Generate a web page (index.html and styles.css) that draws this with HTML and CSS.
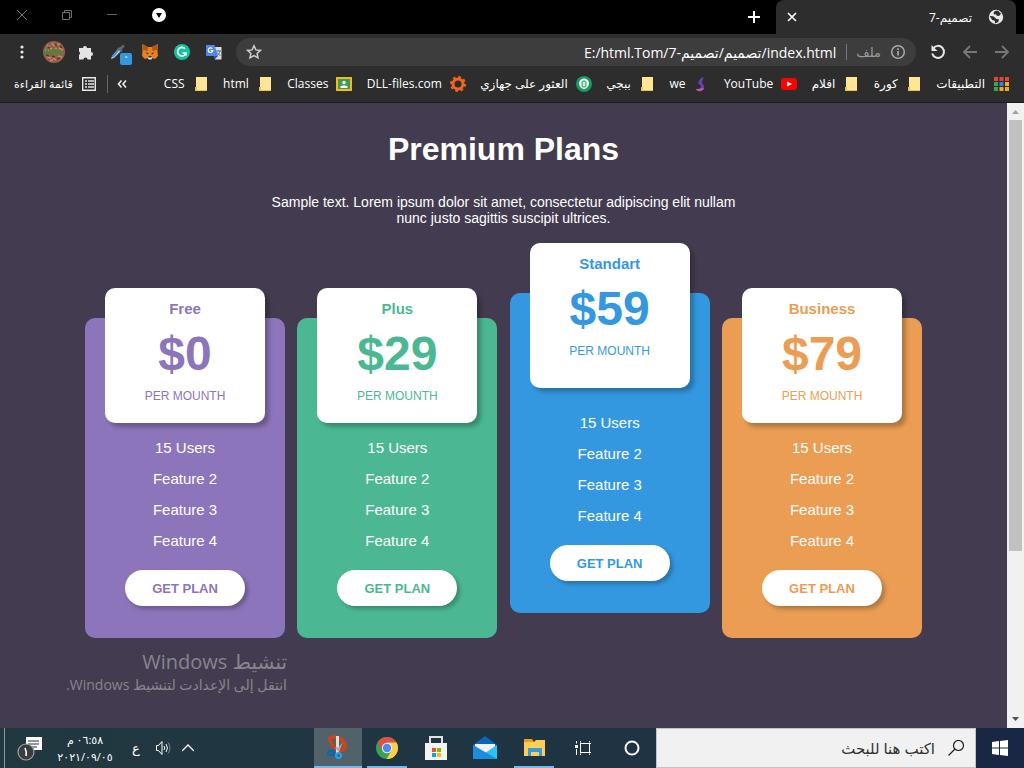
FILE: index.html
```
<!DOCTYPE html>
<html lang="ar">
<head>
<meta charset="utf-8">
<title>تصميم-7</title>
<link rel="stylesheet" href="styles.css">
</head>
<body>
<div class="desktop">
  <header class="browser" dir="rtl">
    <div class="tabstrip">
      <div class="tab">
        <svg class="i16" viewBox="0 0 16 16"><circle cx="8" cy="8" r="7.2" fill="#e8e8e8"/><path d="M6.5 2.2 9.6 1.6 13 4.5l-1.6 2.2-2.5.2L8.200 5.200 6.300 5.600 5.500 4zM1.500 6.800l4.300.8 2.600 2.300 2.500.4-.6 2.600-3.200 1.700-.3-2.800-2.600-.9z" fill="#2d2d2d"/></svg>
        <span class="tab-title">تصميم-7</span>
        <button class="icon-btn" aria-label="Close tab"><svg class="i12" viewBox="0 0 12 12"><path d="M2 2l8 8M10 2l-8 8" stroke="#fff" stroke-width="1.700"/></svg></button>
      </div>
      <button class="icon-btn new-tab" aria-label="New tab"><svg class="i16" viewBox="0 0 16 16"><path d="M8 2v12M2 8h12" stroke="#fff" stroke-width="2"/></svg></button>
      <div class="window-controls">
        <button class="icon-btn" aria-label="Tab search"><svg class="i16" viewBox="0 0 16 16"><circle cx="8" cy="8" r="7" fill="#fff"/><path d="M5 6h6L8 11z" fill="#000"/></svg></button>
        <button class="icon-btn" aria-label="Minimize"><svg class="i12" viewBox="0 0 12 12"><path d="M1 5.500h10" stroke="#666"/></svg></button>
        <button class="icon-btn" aria-label="Restore"><svg class="i12" viewBox="0 0 12 12"><path d="M1.500 3.500h7v7h-7zM3.500 3V1.500h7v7H9" fill="none" stroke="#707070"/></svg></button>
        <button class="icon-btn" aria-label="Close"><svg class="i12" viewBox="0 0 12 12"><path d="M1 1l10 10M11 1L1 11" stroke="#777"/></svg></button>
      </div>
    </div>
    <div class="toolbar">
      <div class="nav">
        <button class="icon-btn" aria-label="Back"><svg class="i16" viewBox="0 0 16 16"><path d="M1 8h13M8 2l6 6-6 6" fill="none" stroke="#777" stroke-width="1.800"/></svg></button>
        <button class="icon-btn" aria-label="Forward"><svg class="i16" viewBox="0 0 16 16"><path d="M15 8H2M8 2L2 8l6 6" fill="none" stroke="#777" stroke-width="1.800"/></svg></button>
        <button class="icon-btn" aria-label="Reload"><svg class="i16" viewBox="0 0 16 16"><path d="M3 4.500A6 6 0 1 1 2.200 9.500" fill="none" stroke="#e6e6e6" stroke-width="2"/><path d="M1.500 1v6h6z" fill="#e6e6e6"/></svg></button>
      </div>
      <div class="omnibox">
        <svg class="i16" viewBox="0 0 16 16"><circle cx="8" cy="8" r="6.300" fill="none" stroke="#aaa" stroke-width="1.500"/><path d="M8 7v4.500M8 4.200v1.700" stroke="#aaa" stroke-width="1.700"/></svg>
        <label class="scheme" for="url">ملف</label>
        <input id="url" class="url" dir="ltr" type="text" value="E:/html.Tom/تصميم/تصميم-7/index.html">
        <button class="icon-btn" aria-label="Bookmark"><svg class="i16" viewBox="0 0 16 16"><path d="M8 1.800l1.900 4.100 4.500.5-3.300 3 .9 4.400-4-2.200-4 2.200.9-4.400-3.300-3 4.500-.5z" fill="none" stroke="#ccc" stroke-width="1.500"/></svg></button>
      </div>
      <div class="extensions">
        <button class="icon-btn" aria-label="Translate"><svg class="i16" viewBox="0 0 16 16"><path d="M7 3h8.500v12.500H9z" fill="#dcdcdc"/><path d="M10 7h5M12.500 6v1M14 7c-.5 2.500-2 4-3.500 5M11 8.500l3.500 3.500" stroke="#607d8b" fill="none"/><path d="M0 1h8.500l3.500 11H0z" fill="#4c86ee"/><path d="M8.500 15.500V12H12z" fill="#2452b5"/><path d="M6.300 4.700a2.300 2.300 0 1 0 .5 2H4.800" stroke="#fff" stroke-width="1.200" fill="none"/></svg></button>
        <button class="icon-btn" aria-label="Grammarly"><svg class="i16" viewBox="0 0 16 16"><circle cx="8" cy="8" r="8" fill="#15c39a"/><path d="M11 4.700A4.300 4.300 0 1 0 12 9H8.500M12 9v2.500" fill="none" stroke="#fff" stroke-width="1.600"/></svg></button>
        <button class="icon-btn" aria-label="MetaMask"><svg class="i16" viewBox="0 0 16 16"><path d="M0 0l6 3h4l6-3-.5 7 .5 5-3 3-3-1H6l-3 1-3-3 .5-5z" fill="#e8821e"/><path d="M0 0l6 3-.5 4L1 6zM16 0l-6 3 .5 4L15 6z" fill="#b5561b"/><path d="M5.500 13h5l-1 2.500h-3z" fill="#ddd"/><path d="M3.500 8.500l3 .5-.5 1.500zM12.500 8.500l-3 .5.500 1.500zM6.500 12h3v1.500h-3z" fill="#26313e"/></svg></button>
        <button class="icon-btn picker" aria-label="Color picker"><svg class="i16" viewBox="0 0 16 16"><path d="M1 15l1-3 6-7 3 2-7 7z" fill="#9fd2f0"/><path d="M2.500 13l6-7" stroke="#3589c6" stroke-width="1.500"/><path d="M8 4l4 3M10 5L14 1.500" stroke="#5b6a70" stroke-width="2.500"/></svg><span class="picker-badge">·</span></button>
        <button class="icon-btn" aria-label="Extensions"><svg class="i16" viewBox="0 0 16 16"><path d="M1 4h4a2 2 0 1 1 4 0h4v4a2 2 0 1 1 0 4v3.500H9.500a2 2 0 0 0-4 0H1V11a2 2 0 0 0 0-3.500z" fill="#e4e4e4"/></svg></button>
        <button class="icon-btn" aria-label="Profile"><svg class="i22" viewBox="0 0 22 22"><circle cx="11" cy="11" r="11" fill="#94604a"/><path d="M4 4l3 2M9 2l2 3M14 4l3-1M2 9l4 1M16 7l4 2M4 16l4 1M10 17l3 2M15 15l4 1M7 7l2 1M12 7l2 1M7 20l3-1" stroke="#c08c70" stroke-width="1.500"/><path d="M5 6l2 1M12 3l2 2M17 5l2 2M3 14l3 1M9 15l3 1M14 18l3-1" stroke="#5e3526" stroke-width="1.500"/><path d="M2 13l2-4 1 3 2-2 1 2 2-2 1 2 2-3 1 3 2-2 1 2 3-1" stroke="#329432" stroke-width="1.600" fill="none"/></svg></button>
        <button class="icon-btn" aria-label="Menu"><svg class="i16" viewBox="0 0 16 16" fill="#e8e8e8"><circle cx="8" cy="3" r="1.600"/><circle cx="8" cy="8" r="1.600"/><circle cx="8" cy="13" r="1.600"/></svg></button>
      </div>
    </div>
    <nav class="bookmarks">
      <div class="bookmark-list">
        <a class="bm" href="#"><svg class="i16" viewBox="0 0 16 16"><path d="M1 1h4v4H1z" fill="#ea4335"/><path d="M6.500 1h4v4h-4zM12 1h4v4h-4z" fill="#ea4335"/><path d="M1 6h4v4H1zM1 11h4v4H1z" fill="#34a853"/><path d="M6.500 6h4v4h-4z" fill="#2b86f5"/><path d="M12 6h4v4h-4zM6.500 11h4v4h-4zM12 11h4v4h-4z" fill="#fbab0b"/></svg><span>التطبيقات</span></a>
        <a class="bm" href="#"><svg class="i16" viewBox="0 0 16 16"><path d="M3 1h11v14H2v-4h1z" fill="#ffe694"/><path d="M2 11h2v3h10v1H2z" fill="#e8c350"/></svg><span>كورة</span></a>
        <a class="bm" href="#"><svg class="i16" viewBox="0 0 16 16"><path d="M3 1h11v14H2v-4h1z" fill="#ffe694"/><path d="M2 11h2v3h10v1H2z" fill="#e8c350"/></svg><span>افلام</span></a>
        <a class="bm" href="#"><svg class="i16" viewBox="0 0 16 16"><rect y="2" width="16" height="12" rx="3" fill="#f00"/><path d="M6 5.500v5L11 8z" fill="#fff"/></svg><span>YouTube</span></a>
        <a class="bm" href="#"><svg class="i16" viewBox="0 0 16 16"><path d="M10 1C5 4 4 7 7 9c2 1.500 1 4-4 4 1 3 7 3 8-1 .8-3-2-4-2-6 0-1.500 2-2 1-5z" fill="#6a3cb8"/><path d="M3 13c3 .5 6-1 8-1-1 4-7 4-8 1z" fill="#c0608f"/></svg><span>we</span></a>
        <a class="bm" href="#"><svg class="i16" viewBox="0 0 16 16"><path d="M3 1h11v14H2v-4h1z" fill="#ffe694"/><path d="M2 11h2v3h10v1H2z" fill="#e8c350"/></svg><span>ببجي</span></a>
        <a class="bm" href="#"><svg class="i16" viewBox="0 0 16 16"><circle cx="8" cy="8" r="8" fill="#169b5b"/><path d="M8 2.500a5 5 0 0 1 5 5c0 3-3 5-5 6-2-1-5-3-5-6a5 5 0 0 1 5-5z" fill="#fff"/><rect x="6" y="5" width="4" height="6" rx="1" fill="#c9e9da" stroke="#169b5b"/></svg><span>العثور على جهازي</span></a>
        <a class="bm" href="#"><svg class="i16" viewBox="0 0 16 16"><circle cx="8" cy="8" r="5" fill="none" stroke="#f4651b" stroke-width="3"/><circle cx="8" cy="8" r="6.900" fill="none" stroke="#f4651b" stroke-width="2.200" stroke-dasharray="2.710 2.710"/></svg><span>DLL-files.com</span></a>
        <a class="bm" href="#"><svg class="i16" viewBox="0 0 16 16"><path d="M0 1h16v14H0z" fill="#f5ba15"/><path d="M2 3h12v10H2z" fill="#3d9a58"/><circle cx="8" cy="6.500" r="1.700" fill="#fff"/><path d="M4.500 12V10.500C5 9 11 9 11.500 10.500V12z" fill="#fff"/></svg><span>Classes</span></a>
        <a class="bm" href="#"><svg class="i16" viewBox="0 0 16 16"><path d="M3 1h11v14H2v-4h1z" fill="#ffe694"/><path d="M2 11h2v3h10v1H2z" fill="#e8c350"/></svg><span>html</span></a>
        <a class="bm" href="#"><svg class="i16" viewBox="0 0 16 16"><path d="M3 1h11v14H2v-4h1z" fill="#ffe694"/><path d="M2 11h2v3h10v1H2z" fill="#e8c350"/></svg><span>CSS</span></a>
      </div>
      <button class="icon-btn more" aria-label="More bookmarks"><svg class="i12" viewBox="0 0 12 12"><path d="M5.500 2.500L2.500 6l3 3.500M10 2.500L7 6l3 3.500" fill="none" stroke="#eee" stroke-width="1.600"/></svg></button>
      <a class="bm reading" href="#"><svg class="i16" viewBox="0 0 16 16"><path d="M1.700 1.700h12.600v12.600H1.700z" fill="none" stroke="#e8e8e8" stroke-width="1.400"/><path d="M4 5h2M7 5h6M4 8h2M7 8h6M4 11h2M7 11h6" stroke="#e8e8e8" stroke-width="1.500"/></svg><span class="ar">قائمة القراءة</span></a>
    </nav>
  </header>

  <div class="viewport">
    <main class="page" dir="ltr">
      <h1>Premium Plans</h1>
      <p class="lead">Sample text. Lorem ipsum dolor sit amet, consectetur adipiscing elit nullam nunc justo sagittis suscipit ultrices.</p>
      <div class="plans">
        <section class="plan free">
          <div class="plan-head"><h2>Free</h2><strong class="price">$0</strong><span class="period">PER MOUNTH</span></div>
          <ul><li>15 Users</li><li>Feature 2</li><li>Feature 3</li><li>Feature 4</li></ul>
          <button class="get">GET PLAN</button>
        </section>
        <section class="plan plus">
          <div class="plan-head"><h2>Plus</h2><strong class="price">$29</strong><span class="period">PER MOUNTH</span></div>
          <ul><li>15 Users</li><li>Feature 2</li><li>Feature 3</li><li>Feature 4</li></ul>
          <button class="get">GET PLAN</button>
        </section>
        <section class="plan standart">
          <div class="plan-head"><h2>Standart</h2><strong class="price">$59</strong><span class="period">PER MOUNTH</span></div>
          <ul><li>15 Users</li><li>Feature 2</li><li>Feature 3</li><li>Feature 4</li></ul>
          <button class="get">GET PLAN</button>
        </section>
        <section class="plan business">
          <div class="plan-head"><h2>Business</h2><strong class="price">$79</strong><span class="period">PER MOUNTH</span></div>
          <ul><li>15 Users</li><li>Feature 2</li><li>Feature 3</li><li>Feature 4</li></ul>
          <button class="get">GET PLAN</button>
        </section>
      </div>
    </main>
    <div class="scrollbar">
      <svg class="arrow" viewBox="0 0 17 17"><path d="M5 11l3.500-4 3.500 4z" fill="#a3a3a3"/></svg>
      <div class="track"><div class="thumb"></div></div>
      <svg class="arrow" viewBox="0 0 17 17"><path d="M5 6l3.500 4L12 6z" fill="#505050"/></svg>
    </div>
    <div class="watermark" dir="rtl"><div class="wm-title">تنشيط Windows</div><div class="wm-text">انتقل إلى الإعدادت لتنشيط Windows.</div></div>
  </div>

  <footer class="taskbar" dir="rtl">
    <button class="task start" aria-label="Start"><svg class="i16" viewBox="0 0 16 16" fill="#fff"><path d="M0 2l7-1v6.500H0zM8 1l8-1v7.500H8zM0 8.500h7V15l-7-1zM8 8.500h8V16l-8-1z"/></svg></button>
    <div class="search">
      <svg class="i16" viewBox="0 0 16 16"><circle cx="10.500" cy="5.500" r="5" fill="none" stroke="#222" stroke-width="1.200"/><path d="M7 9l-6.500 6.500" stroke="#222" stroke-width="1.200"/></svg>
      <input type="text" aria-label="بحث" placeholder="اكتب هنا للبحث">
    </div>
    <div class="apps">
      <button class="task" aria-label="Cortana"><svg class="i16" viewBox="0 0 16 16"><circle cx="8" cy="8" r="6.500" fill="none" stroke="#fff" stroke-width="2"/></svg></button>
      <button class="task" aria-label="Task view"><svg class="i16" viewBox="0 0 16 16"><path d="M1.500 1v2.500M1.500 9v6M5 3.500h11M5 12.500h11M5.500 4v8M14.500 4v8M5.500 1v1.500M14.500 1v1.500M5.500 13.500V15M14.500 13.500V15" stroke="#fff" fill="none"/><path d="M0 5h3v3H0z" fill="#fff"/></svg></button>
      <button class="task open" aria-label="File explorer"><svg class="i24" viewBox="0 0 24 24"><path d="M2 3h8l2 3v3H2z" fill="#e0a21a"/><path d="M2 6h10l2-2h9v16H2z" fill="#fdcf55"/><path d="M6 20v-8h14v8h-3v-4H9v4z" fill="#3d97db"/></svg></button>
      <button class="task" aria-label="Mail"><svg class="i24" viewBox="0 0 24 24"><path d="M0 9L12 0l12 9v3H0z" fill="#0b67bd"/><path d="M2 8h20v9H2z" fill="#f1f1f1"/><path d="M0 9l12 8 12-8v14H0z" fill="#2cc0f5"/><path d="M0 9l24 14H0z" fill="#1b8ee0"/></svg></button>
      <button class="task" aria-label="Store"><svg class="i24" viewBox="0 0 24 24"><path d="M6 8V1h12v7" fill="none" stroke="#e2e2e2" stroke-width="2"/><path d="M1 7h22v17H1z" fill="#f4f4f4"/><path d="M8 12h4v4H8z" fill="#f05123"/><path d="M13 12h4v4h-4z" fill="#80bb02"/><path d="M8 17h4v4H8z" fill="#05a5ef"/><path d="M13 17h4v4h-4z" fill="#fcb90a"/></svg></button>
      <button class="task open" aria-label="Chrome"><svg class="i24" viewBox="0 0 24 24"><circle cx="12" cy="12" r="11" fill="#38a153"/><path d="M2.500 6.500a11 11 0 0 1 19 0H12l-4.500 8z" fill="#de5145"/><path d="M21.500 6.500A11 11 0 0 1 11.500 23l5-8.500L12 6.500z" fill="#ffce45"/><circle cx="12" cy="12" r="5.200" fill="#eee"/><circle cx="12" cy="12" r="4.200" fill="#4c8bf5"/></svg></button>
      <button class="task active" aria-label="Snipping tool"><svg class="i24" viewBox="0 0 24 24"><path d="M2 2q7-4 14 1 7 5 4 11-3 5-9 2Q2 11 2 2zm4 2q0 6 6 9 4 2 5-2 0-4-4-6-4-2-7-1z" fill="#d4430f" fill-rule="evenodd"/><path d="M10 1h3v17h-3z" fill="#ddd"/><path d="M17 7l-4 10-4-4 2-1 1 1z" fill="#aaa"/><ellipse cx="5" cy="18" rx="3" ry="2.200" fill="none" stroke="#0866b5" stroke-width="2.200"/><ellipse cx="12.500" cy="20.500" rx="2.500" ry="2.500" fill="none" stroke="#21a2ef" stroke-width="2.200"/></svg></button>
    </div>
    <div class="tray">
      <button class="icon-btn" aria-label="Hidden icons"><svg class="i12" viewBox="0 0 12 12"><path d="M0 9l6-6 6 6" fill="none" stroke="#fff" stroke-width="1.300"/></svg></button>
      <button class="icon-btn" aria-label="Volume"><svg class="i16" viewBox="0 0 16 16" fill="none" stroke="#fff"><path d="M.5 5.500h2l3.500-4v13l-3.500-4h-2z"/><path d="M8 6q1.500 2 0 4M10 4q3 4 0 8"/><path d="M12 2.500q4 5.500 0 11" stroke="#788890"/></svg></button>
      <span class="lang">ع</span>
      <div class="clock"><span>٠٦:٥٨ م</span><span dir="ltr">٢٠٢١/٠٩/٠٥</span></div>
      <button class="icon-btn" aria-label="Notifications"><svg class="i26" viewBox="0 0 26 26"><path d="M9 2h16v13H14l-4 4v-4H9z" fill="#fff"/><path d="M11 6h11M11 9h11M14 12h6" stroke="#1e333f"/><circle cx="9" cy="17" r="8" fill="#3a3d3f" stroke="#a0a0a0" stroke-width="1.200"/><path d="M8 13q2 4 1 8" stroke="#fff" stroke-width="1.600" fill="none"/></svg></button>
      <span class="show-desktop"></span>
    </div>
  </footer>
</div>
</body>
</html>
```
FILE: styles.css
```
* { box-sizing: border-box; }
body { margin: 0; font-family: "Open Sans", "DejaVu Sans", sans-serif; font-size: 12px; color: #fff; }
button { font: inherit; cursor: pointer; }
svg { display: block; flex: none; }
.i12 { width: 12px; height: 12px; }
.i16 { width: 16px; height: 16px; }
.i22 { width: 22px; height: 22px; }
.i24 { width: 24px; height: 24px; }
.i26 { width: 26px; height: 26px; }
.icon-btn { display: flex; align-items: center; justify-content: center; flex: none; padding: 0; border: 0; background: none; color: #fff; }
.ar { font-size: 11px; }

.desktop { min-height: 100vh; display: flex; flex-direction: column; background: #433c50; }

.browser { background: #2d2d2d; border-bottom: 1px solid #1c1c1c; }
.tabstrip { display: flex; height: 34px; padding-right: 8px; background: #000; }
.tab { display: flex; align-items: center; gap: 16px; width: 240px; padding: 0 12px 0 10px; border-radius: 8px 8px 0 0; background: #2d2d2d; }
.tab-title { flex: 1; font-size: 12px; }
.new-tab { margin-right: 14px; }
.window-controls { display: flex; gap: 33px; margin-right: auto; padding-left: 16px; height: 30px; align-items: center; }
.toolbar { display: flex; align-items: center; height: 36px; padding: 0 14px; }
.nav { display: flex; gap: 16px; margin-left: 14px; }
.omnibox { display: flex; align-items: center; flex: 1; height: 28px; padding: 0 10px; border-radius: 14px; background: #3d3d3d; }
.scheme { margin-right: 9px; padding-left: 9px; border-left: 1px solid #777; color: #999; font-size: 13px; line-height: 16px; }
.url { flex: 1; min-width: 0; padding: 0 10px; border: 0; outline: 0; background: none; color: #fff; font-family: "Open Sans", "DejaVu Sans", sans-serif; font-size: 14px; text-align: right; }
.extensions { display: flex; gap: 16px; margin-right: 14px; }
.extensions .icon-btn { width: 16px; }
.extensions .i22 { margin: 0 -3px; }
.picker { position: relative; }
.picker-badge { position: absolute; left: 10px; top: 12px; width: 12px; height: 12px; border-radius: 2px; background: #3498e0; line-height: 10px; }

.bookmarks { display: flex; align-items: center; height: 32px; padding: 0 15px 4px 14px; }
.bookmark-list { display: flex; flex: 1; justify-content: space-between; }
.bm { display: flex; align-items: center; gap: 8px; color: #fff; text-decoration: none; white-space: nowrap; line-height: 18px; }
.more { margin: 0 36px 0 8px; }
.reading { border-right: 1px solid #666; padding-right: 10px; }

.viewport { position: relative; display: flex; flex: 1; }
.page { flex: 1; padding: 28px 20px 40px; font-family: "Liberation Sans", Arial, sans-serif; text-align: center; }
h1 { margin: 0; font-size: 32px; line-height: 36px; }
.lead { max-width: 480px; margin: 27px auto 67px; font-size: 14px; line-height: 16px; }
.plans { display: flex; flex-wrap: wrap; justify-content: space-between; align-items: flex-start; max-width: 837px; margin: 0 auto; }
.plan { width: 200px; margin-top: 25px; padding: 0 20px 32px; border-radius: 10px; background: var(--tone); }
.free { --tone: #8c75ba; }
.plus { --tone: #4cb893; }
.standart { --tone: #3498e0; margin-top: 0; }
.business { --tone: #ea9d53; }
.plan-head { display: flex; flex-direction: column; min-height: 135px; margin-top: -30px; padding-top: 12px; border-radius: 10px; background: #fff; color: var(--tone); box-shadow: 4px 4px 4px rgba(0, 0, 0, .25); }
.standart .plan-head { min-height: 145px; margin-top: -50px; }
h2 { margin: 0; font-size: 15px; line-height: 18px; }
.price { margin: 9px 0 7px; font-size: 48px; line-height: 54px; }
.period { font-size: 12px; line-height: 16px; }
.plan ul { margin: 9px 0 14px; padding: 0; list-style: none; font-size: 15px; line-height: 31px; }
.standart ul { margin-top: 19px; }
.get { width: 120px; height: 36px; border: 0; border-radius: 18px; background: #fff; color: var(--tone); font-size: 13px; font-weight: 700; box-shadow: 3px 3px 4px rgba(0, 0, 0, .25); }

.scrollbar { display: flex; flex-direction: column; width: 17px; background: #f1f1f1; }
.arrow { width: 17px; height: 17px; }
.track { flex: 1; padding: 0 2px; }
.thumb { height: 73%; background: #c1c1c1; }
.watermark { position: absolute; left: 50px; bottom: 33px; width: 237px; color: #88848d; white-space: nowrap; }
.wm-title { font-size: 20px; line-height: 26px; }
.wm-text { font-size: 14px; line-height: 20px; }

.taskbar { display: flex; height: 40px; background: linear-gradient(to right, #213840, #1f3343 65%, #1a2744 95%); }
.task { display: flex; align-items: center; justify-content: center; width: 48px; padding: 0; border: 0; background: none; }
.search { display: flex; align-items: center; flex: 1; max-width: 320px; padding: 0 11px; border: 1px solid #c4c4c4; background: #f1f1f1; }
.search input { flex: 1; min-width: 0; padding: 0 13px; border: 0; outline: 0; background: none; font-family: "Open Sans", "DejaVu Sans", sans-serif; font-size: 15px; }
.search input::placeholder { color: #333; }
.apps { display: flex; gap: 1px; }
.open { background: linear-gradient(#76b9ed, #76b9ed) center bottom / 40px 2px no-repeat; }
.active { background: #51626b; border-bottom: 2px solid #76b9ed; }
.tray { display: flex; align-items: center; margin-right: auto; }
.lang { width: 12px; margin: 0 14px 0 16px; font-size: 13px; text-align: center; }
.tray .icon-btn + .icon-btn { margin-right: 10px; }
.clock { display: flex; flex-direction: column; width: 58px; margin-left: 13px; font-size: 11px; line-height: 17px; text-align: center; white-space: nowrap; }
.show-desktop { align-self: stretch; width: 5px; margin-right: 12px; border-right: 1px solid #8b979c; }
```
